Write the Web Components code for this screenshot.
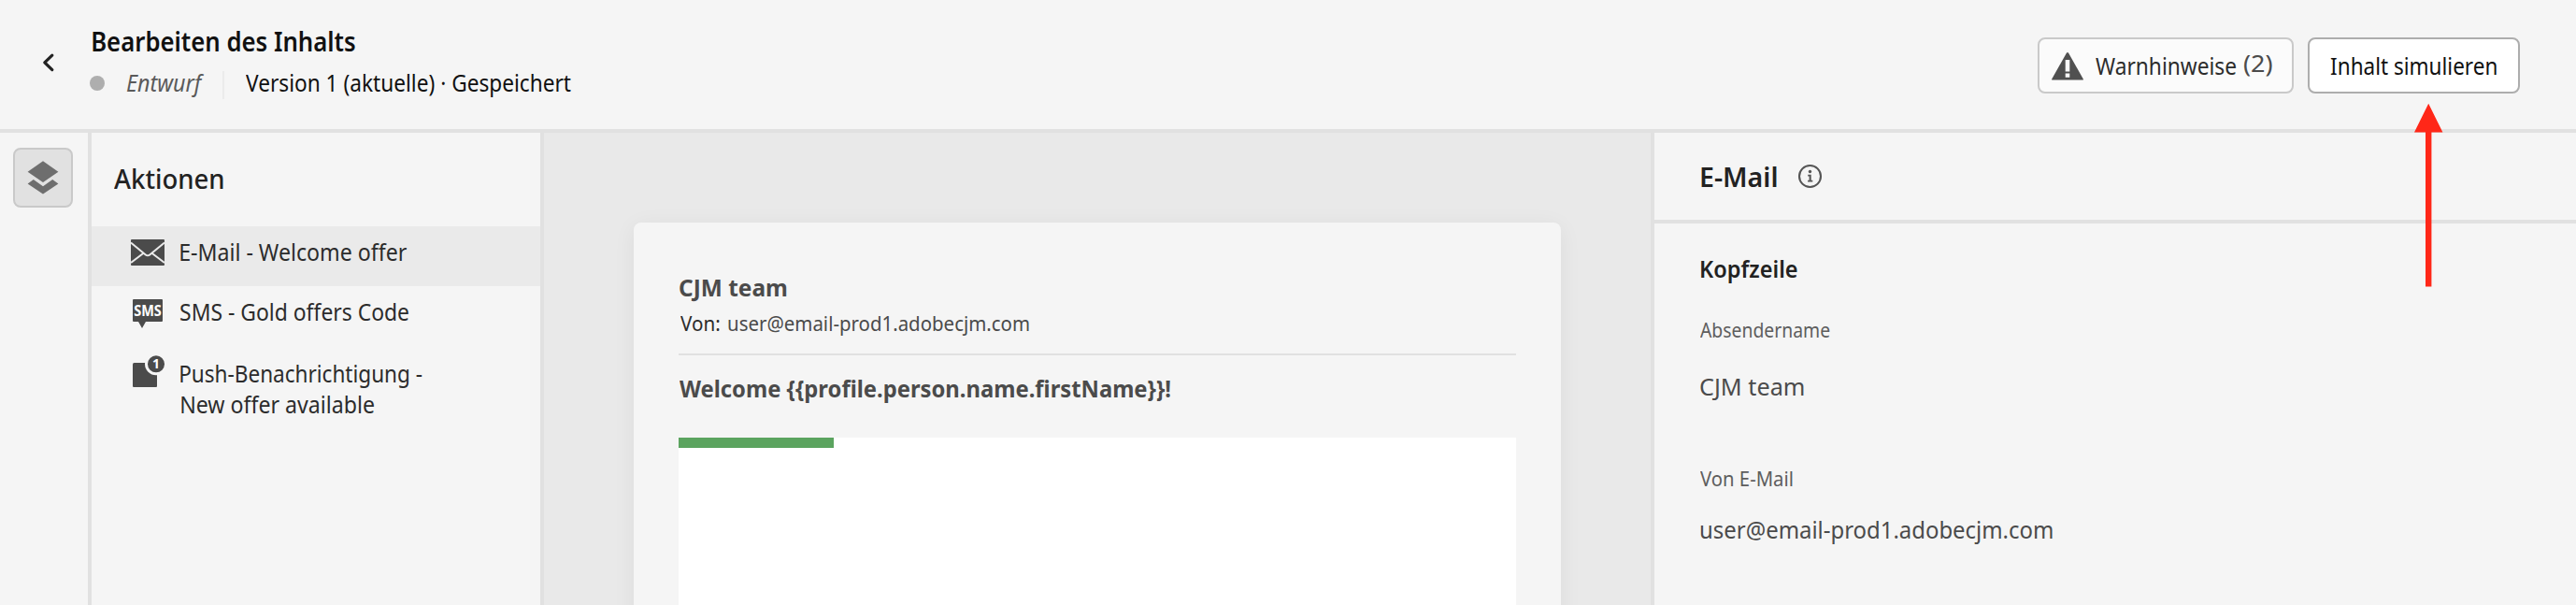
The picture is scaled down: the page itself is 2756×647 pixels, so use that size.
<!DOCTYPE html>
<html lang="de">
<head>
<meta charset="utf-8">
<title>Bearbeiten des Inhalts</title>
<style>
html,body{margin:0;height:647px;overflow:hidden;background:#f5f5f5;font-family:"Noto Sans","Open Sans",sans-serif;color:#2c2c2c}
</style>
</head>
<body>
<journey-app></journey-app>
<script>
const define=(name,html,after)=>customElements.define(name,class extends HTMLElement{
  constructor(){super();this.attachShadow({mode:'open'}).innerHTML=html;}
  connectedCallback(){if(after)after.call(this);}
});

/* Single line of text whose glyphs span exactly the given width (w). */
const pen=document.createElement('canvas').getContext('2d');
define('ui-text',`<style>
:host{display:block;flex:none;height:40px;line-height:40px;white-space:nowrap}
span{display:inline-block;transform-origin:0 0}
</style><span><slot></slot></span>`,function(){
  const g=(a,d)=>this.getAttribute(a)||d;
  const size=+g('size',25),w=+g('w',100);
  this.style.fontSize=size+'px';
  this.style.width=w+'px';
  this.style.fontWeight=g('weight','400');
  this.style.fontStyle=g('slant','normal');
  if(g('tone'))this.style.color=g('tone');
  pen.font=`${g('slant','normal')} ${g('weight','400')} ${size}px "Noto Sans","Open Sans",sans-serif`;
  const m=pen.measureText(this.textContent);
  const k=w/(m.actualBoundingBoxLeft+m.actualBoundingBoxRight);
  this.shadowRoot.querySelector('span').style.transform=`scaleX(${k}) translateX(${m.actualBoundingBoxLeft}px)`;
});

define('ui-button',`<style>
:host{display:flex;box-sizing:border-box;flex:none;height:60px;border:2px solid #c9c9c9;border-radius:8px;background:#fbfbfb;align-items:flex-start}
:host([strong]){border-color:#adadad;background:#fff}
</style><slot></slot>`);

define('app-header',`<style>
:host{display:flex;box-sizing:border-box;height:142px;border-bottom:4px solid #e1e1e1;align-items:flex-start}
.back{margin:55px 38px 0 42px;flex:none}
.titles{padding-top:24px;flex:1}
.meta{display:flex;margin-top:4px;align-items:flex-start}
.dot{width:16px;height:16px;border-radius:50%;background:#aeaeae;margin:13px 24px 0 -2px}
.sep{width:2px;height:30px;background:#ebebeb;margin:8px 23px 0 18.5px}
.actions{display:flex;gap:15px;margin:40px 60px 0 0}
.warn{margin:14px 13.5px 0 12.5px;flex:none}
.label{margin-top:8px}.count{margin:5px 0 0 9px}
</style>
<svg class="back" width="18" height="24" viewBox="0 0 18 24" fill="none" stroke="#222" stroke-width="3.2" stroke-linecap="round" stroke-linejoin="round"><path d="M13.8 4.2 5.8 11.8 13.8 19.6"/></svg>
<div class="titles">
<ui-text size="28" weight="600" w="281" tone="#111" style="margin-left:.5px">Bearbeiten des Inhalts</ui-text>
<div class="meta"><i class="dot"></i><ui-text slant="italic" w="83" tone="#5a5a5a">Entwurf</ui-text><i class="sep"></i><ui-text w="348" tone="#111">Version 1 (aktuelle) · Gespeichert</ui-text></div>
</div>
<div class="actions">
<ui-button style="width:274px">
<svg class="warn" width="34" height="30" viewBox="0 0 34 30"><path fill="#505050" d="M15.9.8q1.1-1.4 2.2 0L33.8 28.6q.4 1-.8 1H1Q-.2 29.6.2 28.6Z"/><path fill="#fbfbfb" d="M14.7 8h4.6v12.5h-4.6zM14.7 22.5h4.6v4.3h-4.6z"/></svg>
<ui-text class="label" w="150">Warnhinweise</ui-text><ui-text class="count" w="30" tone="#4b4b4b">(2)</ui-text></ui-button>
<ui-button strong style="width:227px"><ui-text class="label" w="177" tone="#111" style="margin-left:23px">Inhalt simulieren</ui-text></ui-button>
</div>`);

define('side-rail',`<style>
:host{display:block;box-sizing:border-box;flex:none;width:98px;border-right:4px solid #e1e1e1;padding:16px 0 0 14px}
.tool{box-sizing:border-box;width:64px;height:64px;border:2px solid #c9c9c9;border-radius:8px;background:#e1e1e1;display:grid;place-items:center}
svg{display:block}
</style><div class="tool"><svg width="34" height="36" viewBox="0 0 34 36" fill="#6e6e6e"><path d="M17 .3 33.4 11.7 17 23 .6 11.7Z"/><path d="M6.8 20 17 27.3 27.2 20 33.4 24.4 17 35.5.6 24.4Z"/></svg></div>`);

define('nav-item',`<style>
:host{display:flex;box-sizing:border-box;height:64px;padding:7px 0 0 42px;align-items:flex-start}
:host([selected]){background:#eaeaea}
.icon{width:36px;flex:none;margin:5px 16.5px 0 0}
::slotted(svg){display:block}
</style><div class="icon"><slot name="icon"></slot></div><div><slot></slot></div>`);

define('action-list',`<style>
:host{display:block;box-sizing:border-box;flex:none;width:484px;border-right:4px solid #e1e1e1;padding-top:29px}
.head{margin:0 0 31px 24px}
</style>
<ui-text class="head" size="28" weight="500" w="117" tone="#222">Aktionen</ui-text>
<nav-item selected><svg slot="icon" width="36" height="32" viewBox="0 0 36 32"><rect y="2" width="36" height="28" rx="1" fill="#4b4b4b"/><path d="M0 5.5 15.8 18.4q2.2 1.8 4.4 0L36 5.5M0 27 13.5 16.7M36 27 22.5 16.7" fill="none" stroke="#eaeaea" stroke-width="2"/></svg><ui-text w="242">E-Mail - Welcome offer</ui-text></nav-item>
<nav-item><svg slot="icon" width="36" height="36" viewBox="0 0 36 36"><path d="M3 2h30q1 0 1 1v22q0 1-1 1H16l-4 7-4-7H3q-1 0-1-1V3q0-1 1-1Z" fill="#4b4b4b"/><text x="3.2" y="19.6" font-size="16.5" font-weight="700" textLength="29.6" lengthAdjust="spacingAndGlyphs" fill="#fff">SMS</text></svg><ui-text w="244">SMS - Gold offers Code</ui-text></nav-item>
<nav-item style="height:112px;padding-top:9px"><svg slot="icon" width="36" height="40" viewBox="0 0 36 40" style="margin-top:-6px"><path d="M3.5 10H28v25q0 1-1 1H3q-1 0-1-1V11.5Q2 10 3.5 10Z" fill="#4b4b4b"/><circle cx="27" cy="11.3" r="12" fill="#f5f5f5"/><circle cx="27" cy="11.3" r="9" fill="#4b4b4b"/><text x="27" y="16.3" font-size="14" font-weight="700" text-anchor="middle" fill="#fff">1</text></svg><ui-text w="259">Push-Benachrichtigung -</ui-text><ui-text w="206" style="margin:-7px 0 0 1px">New offer available</ui-text></nav-item>`);

define('email-preview',`<style>
:host{display:block;box-sizing:border-box;flex:none;width:1184px;background:#e9e9e9;padding:96px 96px 0;overflow:hidden}
.card{box-sizing:border-box;height:520px;background:#f5f5f5;border-radius:8px;box-shadow:0 4px 24px rgba(0,0,0,.06);padding:49px 48px 0;display:flex;flex-direction:column}
.from{display:flex;gap:9px;padding:0 0 12px 1.5px;margin-top:-1px;border-bottom:2px solid #e1e1e1}
.subject{margin:15px 0 33px .5px}
.body{flex:1;background:#fff}
.bar{width:166px;height:11px;background:#5ba45f}
</style><div class="card">
<ui-text weight="700" w="114.5" tone="#4b4b4b" style="margin-left:.5px">CJM team</ui-text>
<div class="from"><ui-text size="21.5" w="42">Von:</ui-text><ui-text size="21.5" w="322" tone="#4b4b4b">user@email-prod1.adobecjm.com</ui-text></div>
<ui-text class="subject" weight="700" w="525" tone="#4b4b4b">Welcome {{profile.person.name.firstName}}!</ui-text>
<div class="body"><div class="bar"></div></div></div>`);

define('detail-field',`<style>:host{display:block}</style><slot></slot>`);

define('detail-panel',`<style>
:host{display:block;box-sizing:border-box;flex:1;border-left:4px solid #e1e1e1}
.head{display:flex;box-sizing:border-box;height:97px;border-bottom:4px solid #e1e1e1;padding:27px 0 0 49.5px;gap:22px}
.head svg{margin-top:5px}
.fields{padding:28px 0 0 49px}
</style>
<div class="head"><ui-text size="28" weight="600" w="80.5" tone="#222">E-Mail</ui-text>
<svg width="29" height="29" viewBox="0 0 29 29"><circle cx="14.5" cy="14.5" r="11.5" fill="none" stroke="#555" stroke-width="2.1"/><circle cx="14.5" cy="9.5" r="1.7" fill="#555"/><path d="M12.2 12.7h3.5v6.1h1.6v1.8h-5.2v-1.8h1.5v-4.4h-1.4z" fill="#555"/></svg></div>
<div class="fields">
<ui-text weight="600" w="103" tone="#222" style="margin-left:.5px">Kopfzeile</ui-text>
<detail-field style="margin-top:26px"><ui-text size="21.5" w="139" tone="#5e5e5e">Absendername</ui-text><ui-text w="111" tone="#4b4b4b" style="margin-top:20px">CJM team</ui-text></detail-field>
<detail-field style="margin-top:59px"><ui-text size="21.5" w="98.5" tone="#5e5e5e">Von E-Mail</ui-text><ui-text w="377" tone="#4b4b4b" style="margin-top:14px">user@email-prod1.adobecjm.com</ui-text></detail-field>
</div>`);

define('callout-arrow',`<style>:host{display:block;position:absolute;left:2583px;top:110px;width:31px;height:197px}svg{display:block}</style>
<svg width="31" height="197" viewBox="0 0 31 197" fill="#ff2718"><path d="M15.2.7 30.4 31.4H18.4V196.4H12V31.4H0Z"/></svg>`);

define('journey-app',`<style>
:host{display:flex;flex-direction:column;position:relative;width:2756px;height:647px;overflow:hidden}
main{display:flex;flex:1;min-height:0}
</style><app-header></app-header><main><side-rail></side-rail><action-list></action-list><email-preview></email-preview><detail-panel></detail-panel></main><callout-arrow></callout-arrow>`);
</script>
</body>
</html>
